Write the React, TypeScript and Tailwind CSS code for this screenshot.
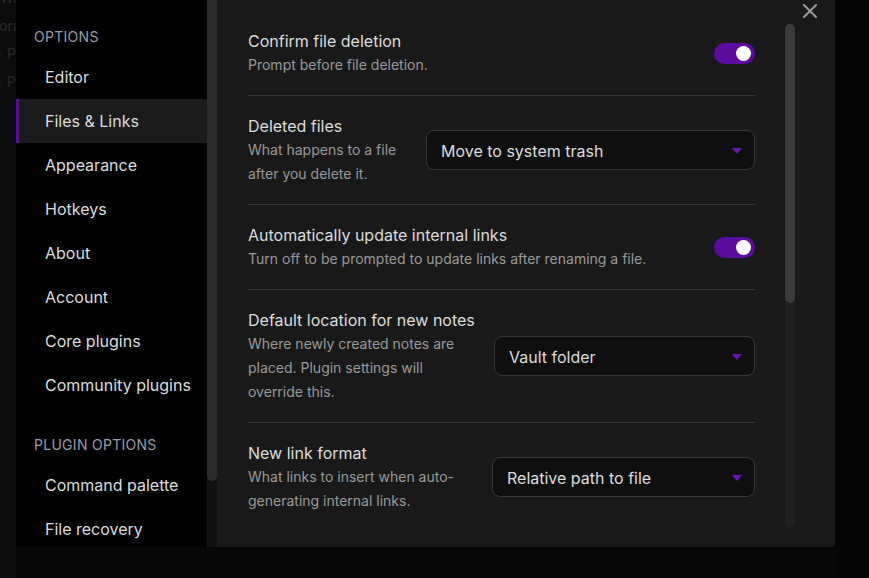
import React from "react";

const navItems = [
  "Editor",
  "Files & Links",
  "Appearance",
  "Hotkeys",
  "About",
  "Account",
  "Core plugins",
  "Community plugins",
];

const pluginItems = ["Command palette", "File recovery"];

const Toggle = () => (
  <div className="w-[41px] h-[21px] rounded-full bg-[#5c0aa0] flex items-center justify-end pr-[4px] shrink-0">
    <div className="w-[15px] h-[15px] rounded-full bg-white" />
  </div>
);

const Dropdown = ({ value, width }: { value: string; width: string }) => (
  <div
    className={`${width} h-[40px] shrink-0 rounded-[8px] border border-[#363636] bg-[#0f0f0f] flex items-center justify-between pl-[14px] pr-[12px] pt-[1px]`}
  >
    <span className="text-[16px] text-[#dcddde]">{value}</span>
    <svg width="10" height="6" viewBox="0 0 10 6">
      <path d="M0 0 L10 0 L5 6 Z" fill="#6a14b8" />
    </svg>
  </div>
);

interface RowProps {
  title: string;
  desc: string;
  control: React.ReactNode;
  infoPad?: string;
  first?: boolean;
}

const SettingRow = ({ title, desc, control, infoPad = "", first }: RowProps) => (
  <div
    className={`flex items-center py-[18px] ${first ? "" : "border-t border-[#353535]"}`}
  >
    <div className={`flex-1 min-w-0 ${infoPad}`}>
      <div className="text-[16px] leading-[24px] text-[#dcddde] whitespace-nowrap">{title}</div>
      <div className="text-[14px] leading-[24px] text-[#999999]">{desc}</div>
    </div>
    {control}
  </div>
);

export default function App() {
  return (
    <div
      className="w-[869px] h-[578px] bg-[#070707] flex overflow-hidden"
      style={{ fontFamily: "Inter, 'Noto Sans', sans-serif" }}
    >
      {/* backdrop strip on the left */}
      <div className="w-[16px] h-full bg-[#0c0c0c] overflow-hidden text-[14px] text-[#2a2a2a] leading-[28px] shrink-0">
        <div className="-mt-[16px] whitespace-nowrap">Wn</div>
        <div className="whitespace-nowrap -ml-[1px]">ora</div>
        <div className="flex items-center gap-[4px] -ml-[3px]">
          <span className="w-[8px] h-[8px] rounded-full bg-[#101010]" />
          <span>P</span>
        </div>
        <div className="flex items-center gap-[4px] -ml-[3px]">
          <span className="w-[8px] h-[8px] rounded-full bg-[#101010]" />
          <span>P</span>
        </div>
      </div>

      {/* modal */}
      <div className="w-[819px] h-[547px] flex rounded-b-[4px] overflow-hidden shrink-0">
        {/* sidebar */}
        <div className="w-[191px] h-full bg-black pt-[27px] overflow-hidden shrink-0">
          <div className="pl-[18px] text-[14px] leading-[20px] tracking-[0.02em] text-[#9a9aac] mb-[8px]">
            OPTIONS
          </div>
          {navItems.map((item) => (
            <div
              key={item}
              className={`h-[44px] flex items-center pl-[26px] border-l-[3px] text-[16px] text-[#dcddde] ${
                item === "Files & Links"
                  ? "border-[#5c0aa0] bg-[#1b1b1b]"
                  : "border-transparent"
              }`}
            >
              {item}
            </div>
          ))}
          <div className="pl-[18px] mt-[28px] text-[14px] leading-[20px] tracking-[0.02em] text-[#9a9aac] mb-[8px]">
            PLUGIN OPTIONS
          </div>
          {pluginItems.map((item) => (
            <div
              key={item}
              className="h-[44px] flex items-center pl-[26px] border-l-[3px] border-transparent text-[16px] text-[#dcddde]"
            >
              {item}
            </div>
          ))}
        </div>

        {/* sidebar scrollbar */}
        <div className="w-[10px] h-full bg-[#121212] shrink-0">
          <div className="w-full h-[481px] bg-[#2b2b2b] rounded-b-full" />
        </div>

        {/* content */}
        <div className="flex-1 min-w-0 h-full bg-[#191919] flex">
          <div className="flex-1 min-w-0 pl-[31px] pr-[30px] pt-[11px]">
            <SettingRow
              first
              title="Confirm file deletion"
              desc="Prompt before file deletion."
              control={<Toggle />}
            />
            <SettingRow
              title="Deleted files"
              desc="What happens to a file after you delete it."
              infoPad="pr-[20px]"
              control={<Dropdown value="Move to system trash" width="w-[329px]" />}
            />
            <SettingRow
              title="Automatically update internal links"
              desc="Turn off to be prompted to update links after renaming a file."
              control={<Toggle />}
            />
            <SettingRow
              title="Default location for new notes"
              desc="Where newly created notes are placed. Plugin settings will override this."
              infoPad="pr-[20px]"
              control={<Dropdown value="Vault folder" width="w-[261px]" />}
            />
            <SettingRow
              title="New link format"
              desc="What links to insert when auto-generating internal links."
              infoPad="pr-[20px]"
              control={<Dropdown value="Relative path to file" width="w-[263px]" />}
            />
          </div>

          {/* content scrollbar */}
          <div className="w-[10px] mt-[24px] h-[504px] rounded-full bg-[#202020] shrink-0">
            <div className="w-full h-[279px] rounded-full bg-[#3b3b3b]" />
          </div>

          <div className="w-[40px] shrink-0 pt-[4px] pl-[8px]">
            <svg width="14" height="14" viewBox="0 0 14 14">
              <path
                d="M1 1 L13 13 M13 1 L1 13"
                stroke="#9a9a9a"
                strokeWidth="2"
                strokeLinecap="square"
              />
            </svg>
          </div>
        </div>
      </div>

      <div className="flex-1 h-full bg-[#050505]" />
    </div>
  );
}
